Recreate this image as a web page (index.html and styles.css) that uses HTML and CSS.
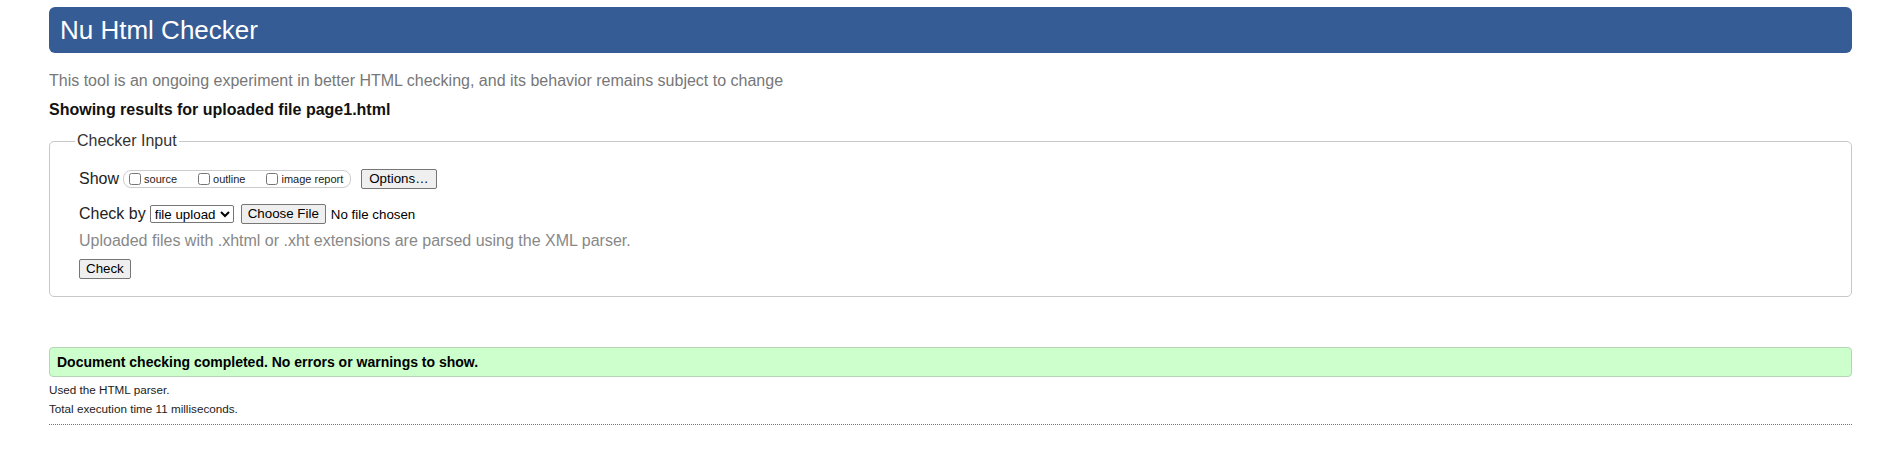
FILE: index.html
```html
<!DOCTYPE html>
<html lang="en">
<head>
<meta charset="utf-8">
<title>Showing results for page1.html - Nu Html Checker</title>
<link rel="stylesheet" href="styles.css">
</head>
<body>
<h1 class="title">Nu Html Checker</h1>
<p class="intro">This tool is an ongoing experiment in better HTML checking, and its behavior remains subject to change</p>
<p class="showing">Showing results for uploaded file page1.html</p>
<fieldset class="input">
  <legend class="input-legend">Checker Input</legend>
  <div class="row row-show">
    <span class="label">Show</span>
    <span class="show-group">
      <label class="opt"><input type="checkbox" class="cb">source</label>
      <label class="opt"><input type="checkbox" class="cb">outline</label>
      <label class="opt"><input type="checkbox" class="cb">image report</label>
    </span>
    <button type="button" class="btn btn-options">Options…</button>
  </div>
  <div class="row row-check">
    <span class="label">Check by</span>
    <select class="sel"><option>file upload</option></select>
    <button type="button" class="btn btn-file">Choose File</button>
    <span class="nofile">No file chosen</span>
  </div>
  <p class="hint">Uploaded files with .xhtml or .xht extensions are parsed using the XML parser.</p>
  <div class="row-submit"><button type="button" class="btn">Check</button></div>
</fieldset>
<p class="success">Document checking completed. No errors or warnings to show.</p>
<p class="details details-first">Used the HTML parser.</p>
<p class="details">Total execution time 11 milliseconds.</p>
<hr class="sep">
</body>
</html>
```
FILE: styles.css
```css
html, body {
  background: #fff;
}
body {
  margin: 0;
  padding: 7px 35px 0 49px;
  font-family: "Liberation Sans", Arial, sans-serif;
  font-size: 16px;
  color: #000;
}
.title {
  margin: 0;
  height: 46px;
  line-height: 46px;
  padding: 0 11px;
  background: #365c96;
  color: #fff;
  font-size: 26px;
  font-weight: normal;
  border-radius: 6px;
}
.intro {
  margin: 19px 0 0;
  color: #777;
  font-size: 16px;
  line-height: 18px;
}
.showing {
  margin: 11px 0 0;
  font-weight: bold;
  font-size: 16px;
  line-height: 18px;
  color: #111;
}
.input {
  margin: 13px 0 0;
  padding: 19px 20px 17px 29px;
  border: 1px solid #c8c8c8;
  border-radius: 5px;
}
.input-legend {
  padding: 0 2px;
  margin-left: -4px;
  color: #333;
  font-size: 16px;
}
.row {
  display: flex;
  align-items: center;
  height: 20px;
}
.row-check {
  margin-top: 15px;
}
.label {
  color: #222;
  font-size: 16px;
  margin-right: 4px;
}
.show-group {
  display: inline-flex;
  align-items: center;
  height: 16px;
  border: 1px solid #ccc;
  border-radius: 8px;
  padding: 0 7px 0 5px;
  margin-right: 10px;
  font-size: 11px;
  color: #222;
}
.opt {
  display: inline-flex;
  align-items: center;
  margin-right: 21px;
}
.opt:last-child {
  margin-right: 0;
}
.cb {
  width: 12px;
  height: 12px;
  margin: 0 3px 0 0;
}
.btn {
  font-family: "Liberation Sans", Arial, sans-serif;
  font-size: 13.33px;
  height: 20px;
  padding: 0 6px;
  border: 1px solid #767676;
  border-radius: 2px;
  background: #efefef;
  color: #000;
  line-height: 16px;
}
.btn-options {
  padding: 0 7px;
}
.sel {
  font-family: "Liberation Sans", Arial, sans-serif;
  font-size: 13.33px;
  height: 18px;
  width: 84px;
  margin-right: 7px;
  padding: 0;
  border: 1px solid #767676;
  border-radius: 2px;
  background: #fff;
  color: #000;
}
.nofile {
  font-size: 13.33px;
  margin-left: 5px;
  color: #000;
}
.hint {
  margin: 8px 0 0;
  color: #888;
  font-size: 16px;
  line-height: 18px;
}
.row-submit {
  margin-top: 9px;
  height: 20px;
}
.success {
  margin: 50px 0 0;
  height: 28px;
  line-height: 28px;
  padding: 0 7px;
  background: #ccffcc;
  border: 1px solid #b5d4b5;
  border-radius: 4px;
  font-weight: bold;
  font-size: 14px;
  color: #000;
}
.details {
  margin: 5px 0 0;
  font-size: 11.7px;
  line-height: 14px;
  color: #222;
}
.details-first {
  margin-top: 6px;
}
.sep {
  margin: 8px 0 0;
  border: 0;
  border-top: 1px dotted #777;
  height: 0;
}
```
